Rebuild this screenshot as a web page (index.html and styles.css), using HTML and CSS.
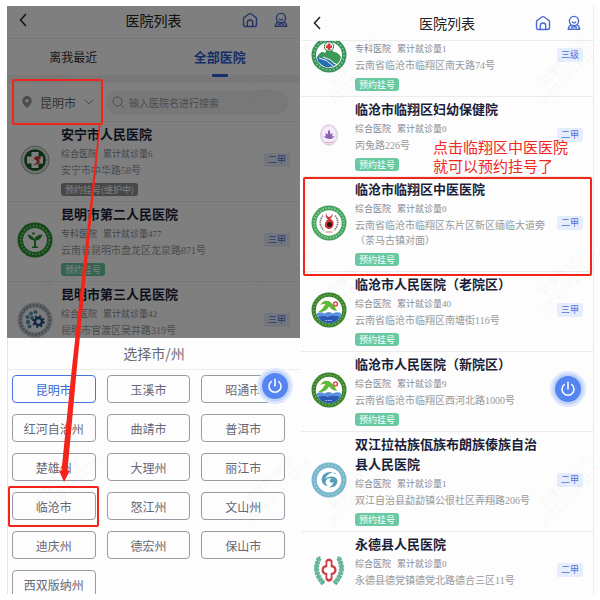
FILE: index.html
```html
<!DOCTYPE html>
<html lang="zh-CN">
<head>
<meta charset="utf-8">
<title>医院列表</title>
<link rel="stylesheet" href="styles.css">
</head>
<body>
<svg class="defs" aria-hidden="true">
  <symbol id="i-back" viewBox="0 0 8 14"><path d="M7 1 1.500 7 7 13" fill="none" stroke="#222" stroke-width="1.500"/></symbol>
  <symbol id="i-home" viewBox="0 0 16 16"><path d="M1.500 7Q1.500 5.800 2.400 5.200L6.800 2Q8 1.200 9.200 2L13.600 5.200Q14.500 5.800 14.500 7V12.500Q14.500 14.500 12.500 14.500H3.500Q1.500 14.500 1.500 12.500ZM5.300 14.500V10.700a2.700 2.700 0 0 1 5.400 0V14.500" fill="none" stroke="#4a68cf" stroke-width="1.400"/></symbol>
  <symbol id="i-user" viewBox="0 0 14 16"><g fill="none" stroke="#4a68cf" stroke-width="1.400" stroke-linejoin="round"><circle cx="7" cy="6" r="4.600"/><path d="M5 6.800Q7 9 9 6.800M3.800 9.600Q1.800 11 1.200 14.300H12.800Q12.200 11 10.200 9.600M4 12.500Q7 11 10 12.500"/></g></symbol>
  <symbol id="i-power" viewBox="0 0 36 36"><circle cx="18" cy="18" r="18" fill="#dfe8fd"/><circle cx="18" cy="18" r="15.500" fill="#c3d4fb"/><circle cx="18" cy="18" r="13" fill="#5585f2"/><path d="M14.300 13.500a6 6 0 1 0 7.400 0M18 11.300V18" fill="none" stroke="#fff" stroke-width="1.500" stroke-linecap="round"/></symbol>
  <symbol id="l-cross" viewBox="0 0 36 36"><circle cx="18" cy="18" r="14" fill="#f6f6f6" stroke="#8fa394" stroke-width="1"/><circle cx="18" cy="18" r="12.200" fill="none" stroke="#a9c4ae" stroke-width="1.300" stroke-dasharray="1.500 1.500"/><circle cx="18" cy="18" r="10.800" fill="#1f5a2b"/><path d="M14.500 10h7v4.500H26v7h-4.500V26h-7v-4.500H10v-7h4.500Z" fill="#fff"/><path d="M22.500 14.500c-5-1.500-7 2-4 3.500 3 1.500 1 4-3 4.500 6 1.500 9-3 6-5 3 0 3-2 1-3Z" fill="#d3352e"/></symbol>
  <symbol id="l-sprout" viewBox="0 0 36 36"><circle cx="18" cy="18" r="17.500" fill="#27912f"/><circle cx="18" cy="18" r="14.300" fill="none" stroke="#9fd3a2" stroke-width="1.800" stroke-dasharray="1.600 1.800"/><circle cx="18" cy="18" r="12" fill="#fff"/><path d="M17 24.500V18.500Q11.500 17.500 10.500 12.500 15.500 13 17.500 17 19 12.500 25.500 12.500 24 18 19 18.500V24.500H21V26H15V24.500Z" fill="#27912f"/><circle cx="16.500" cy="11.500" r="1.300" fill="#27912f"/></symbol>
  <symbol id="l-gear" viewBox="0 0 36 36"><circle cx="18" cy="18" r="17.500" fill="#c4c8cc"/><circle cx="18" cy="18" r="14.700" fill="none" stroke="#8797a5" stroke-width="2.500" stroke-dasharray="2 1.500"/><circle cx="18" cy="18" r="12.300" fill="#f6f8fa"/><g fill="#5595b6"><circle cx="11" cy="20" r="2.200"/><circle cx="10.500" cy="15" r="2"/><circle cx="14" cy="11.500" r="2"/><circle cx="18.500" cy="10" r="2"/><circle cx="12.500" cy="24.500" r="2"/><circle cx="15" cy="16" r="2"/></g><circle cx="21.500" cy="19.500" r="3.500" fill="none" stroke="#1e4c80" stroke-width="2.400"/><circle cx="21.500" cy="19.500" r="5.300" fill="none" stroke="#1e4c80" stroke-width="2" stroke-dasharray="2.100 2.060"/></symbol>
  <symbol id="l-landscape" viewBox="0 0 36 36"><circle cx="18" cy="18" r="17.500" fill="#369258"/><circle cx="18" cy="18" r="15" fill="none" stroke="#8cc6a0" stroke-width="1.600" stroke-dasharray="1.600 2"/><circle cx="18" cy="18" r="13" fill="#fff"/><path d="M6 20Q10 13 14 16q4-7 9-1 4 0 7 5-1 5-4 7-10-5-20-7Z" fill="#3c9a57"/><path d="M6 20q11-1 19 8-8 5-15-.5Q6 24 6 20Z" fill="#276eae"/><path d="M8 21q8 1 14 8M12 20q8 2 12 7" fill="none" stroke="#fff" stroke-width="1"/><circle cx="18" cy="9.500" r="4.700" fill="#e9eee7" stroke="#338250"/><path d="M16.700 6.500h2.600v2H21v2.600h-1.700v2h-2.600v-2H15V8.500h1.700Z" fill="#d93939"/></symbol>
  <symbol id="l-lotus" viewBox="0 0 36 36"><ellipse cx="18" cy="18" rx="8.500" ry="10.300" fill="#ecdef0" stroke="#cfc4d4" stroke-width=".8"/><ellipse cx="18" cy="17.500" rx="6.500" ry="8" fill="#f6eef9"/><path d="M18 12.500q2 2.500 1 5l2.500-1.500q.5 2.500-1 3.500l3-.5q-1.500 3.500-5.500 3t-5.500-3l3 .5q-1.500-1-1-3.500l2.500 1.500Q16 15 18 12.500Z" fill="#8a62b9"/><path d="M14 25q4 1.500 8 0" fill="none" stroke="#dba9c1"/></symbol>
  <symbol id="l-tcm" viewBox="0 0 36 36"><circle cx="18" cy="18" r="17.500" fill="#43a35c"/><circle cx="18" cy="18" r="14.900" fill="none" stroke="#8fcb9a" stroke-width="2" stroke-dasharray="1.500 1.500"/><circle cx="18" cy="18" r="12.700" fill="#fff"/><path d="M12 10.500q-6 7.500 1 15M24 10.500q6 7.500-1 15" fill="none" stroke="#8b8080" stroke-width="1.800" stroke-dasharray="1.500 .8"/><path d="M15 8q1 4 3 4t3.500-3.500q.5 4-2.500 5 4.500 2 3.500 6.500-1.500 4.500-5 4-4.500-1-3.500-5.500 1-3.500 3-4-3-2-2-6.500Z" fill="#ce3636"/><circle cx="18.500" cy="19.500" r="2.500" fill="#2a1717"/><path d="M14.500 27h7" stroke="#c77"/></symbol>
  <symbol id="l-people" viewBox="0 0 36 36"><circle cx="18" cy="18" r="17.500" fill="#39832c"/><circle cx="18" cy="18" r="15.200" fill="none" stroke="#7fb56c" stroke-width="1.300" stroke-dasharray="1.300 2"/><circle cx="18" cy="18" r="13.200" fill="#fff"/><path d="M7 20Q12 17 14.500 12q-3-.5-5.500 1 3.500-5.500 9-4 5 3.500 8 10-5-.5-8-4.500-3 6-11 5.500Z" fill="#62b83c"/><path d="M5.500 21.500q4.500-2.500 7.500 0 5-3 9 0 4-2.500 8.500 0-2 9.500-12.500 9.700-10-.2-12.500-9.700Z" fill="#5b91dd"/><path d="M7.500 25q5-2 9 0 6-2.500 12 0-3 6-10.500 6T7.500 25Z" fill="#2d59b5"/><path d="M14.500 28.500h7" stroke="#a9c0ea" stroke-dasharray="1.500 .8"/><circle cx="24.500" cy="12" r="1.900" fill="none" stroke="#d65345" stroke-width="1.500"/></symbol>
  <symbol id="l-swirl" viewBox="0 0 36 36"><circle cx="18" cy="18" r="17.500" fill="#78b7cc"/><circle cx="18" cy="18" r="14.900" fill="none" stroke="#a5d0dd" stroke-width="1.500" stroke-dasharray="1.300 2.500"/><circle cx="18" cy="18" r="12.300" fill="#fff"/><path d="M22 10Q11 9 10.500 17.500 11 24 17 24q-3.500-2.500-2-5.500 2-3 5.500-2-2.500 1.500-1.500 3.500 1.500 1.500 3.500 0-.5 3-4.500 5.500 9-.5 8.500-7-1.500-4.500-7-4-3 .3-5.500 2.500Q16 12 22 10Z" fill="#579eb9"/><path d="M22.500 11q2.500-.5 2.500 1.500" fill="none" stroke="#92c2d2"/></symbol>
  <symbol id="l-laurel" viewBox="0 0 36 36"><g fill="none" stroke="#66b59b"><path d="M9 4.500Q0 19 13 31.500M27 4.500Q36 19 23 31.500" stroke-width="2"/><path d="M8.500 6Q1 19 12.500 31.500M27.500 6Q35 19 23.500 31.500" stroke-width="5" stroke-dasharray="3 .6"/></g><path d="M14.500 8.500Q18 4.500 21.500 8.500V13q4 1 4 5t-4 5v4.500Q18 32 14.500 27.500V23q-4-1-4-5t4-5Z" fill="#cc4148"/><path d="M16.300 10Q18 8 19.700 10v5q3.500.5 3.500 3t-3.500 3v5Q18 28 16.300 26v-5q-3.500-.5-3.500-3t3.500-3Z" fill="#fff"/></symbol>
</svg>

<main class="board">
  <section class="phone phone-city">
    <div class="page dimmed">
      <header class="bar">
        <a class="back" href="#" aria-label="返回"><svg><use href="#i-back"/></svg></a>
        <h1>医院列表</h1>
        <nav><a href="#" aria-label="首页"><svg class="home"><use href="#i-home"/></svg></a><a href="#" aria-label="我的"><svg class="user"><use href="#i-user"/></svg></a></nav>
      </header>
      <div class="tabs"><button>离我最近</button><button class="on">全部医院</button></div>
      <div class="filter">
        <button class="place">
          <svg class="pin" viewBox="0 0 10 12"><path fill-rule="evenodd" d="M5 0a4.700 4.700 0 0 1 4.700 4.700Q9.700 8 5 12 .3 8 .3 4.700A4.700 4.700 0 0 1 5 0ZM5 3a1.800 1.800 0 1 0 0 3.600A1.800 1.800 0 0 0 5 3Z" fill="#999"/></svg>
          <span>昆明市</span>
          <svg class="down" viewBox="0 0 10 6"><path d="M.7.7 5 5 9.300.7" fill="none" stroke="#999"/></svg>
        </button>
        <label class="search"><svg viewBox="0 0 12 12"><path d="M9 9 11.500 11.500M5.500 1a4.500 4.500 0 1 0 0 9 4.500 4.500 0 0 0 0-9Z" fill="none" stroke="#999"/></svg><input type="text" placeholder="输入医院名进行搜索" aria-label="搜索医院"></label>
      </div>
      <ul class="list">
        <li><svg class="logo"><use href="#l-cross"/></svg><div class="info"><h2>安宁市人民医院</h2><p class="meta"><span>综合医院</span><span>累计就诊量6</span></p><p class="addr">安宁市中华路58号</p><button class="book off">预约挂号(维护中)</button></div><span class="grade">二甲</span></li>
        <li><svg class="logo"><use href="#l-sprout"/></svg><div class="info"><h2>昆明市第二人民医院</h2><p class="meta"><span>专科医院</span><span>累计就诊量477</span></p><p class="addr">云南省昆明市盘龙区龙泉路871号</p><button class="book">预约挂号</button></div><span class="grade">三甲</span></li>
        <li><svg class="logo"><use href="#l-gear"/></svg><div class="info"><h2>昆明市第三人民医院</h2><p class="meta"><span>综合医院</span><span>累计就诊量42</span></p><p class="addr">昆明市官渡区吴井路319号</p></div><span class="grade">三甲</span></li>
      </ul>
    </div>
    <div class="sheet">
      <h2>选择市/州</h2>
      <div class="cities">
        <button class="on">昆明市</button><button>玉溪市</button><button>昭通市</button>
        <button>红河自治州</button><button>曲靖市</button><button>普洱市</button>
        <button>楚雄州</button><button>大理州</button><button>丽江市</button>
        <button>临沧市</button><button>怒江州</button><button>文山州</button>
        <button>迪庆州</button><button>德宏州</button><button>保山市</button>
        <button>西双版纳州</button>
      </div>
    </div>
    <button class="power" aria-label="退出"><svg><use href="#i-power"/></svg></button>
  </section>

  <section class="phone phone-list">
    <header class="bar">
      <a class="back" href="#" aria-label="返回"><svg><use href="#i-back"/></svg></a>
      <h1>医院列表</h1>
      <nav><a href="#" aria-label="首页"><svg class="home"><use href="#i-home"/></svg></a><a href="#" aria-label="我的"><svg class="user"><use href="#i-user"/></svg></a></nav>
    </header>
    <div class="scroller">
      <ul class="list scrolled">
        <li><svg class="logo"><use href="#l-landscape"/></svg><div class="info"><div class="passed"></div><p class="meta"><span>专科医院</span><span>累计就诊量1</span></p><p class="addr">云南省临沧市临翔区南天路74号</p><button class="book">预约挂号</button></div><span class="grade">三级</span></li>
        <li><svg class="logo"><use href="#l-lotus"/></svg><div class="info"><h2>临沧市临翔区妇幼保健院</h2><p class="meta"><span>综合医院</span><span>累计就诊量0</span></p><p class="addr">丙兔路226号</p><button class="book">预约挂号</button></div><span class="grade">二甲</span></li>
        <li><svg class="logo"><use href="#l-tcm"/></svg><div class="info"><h2>临沧市临翔区中医医院</h2><p class="meta"><span>综合医院</span><span>累计就诊量0</span></p><p class="addr">云南省临沧市临翔区东片区新区缅临大道旁（茶马古镇对面）</p><button class="book">预约挂号</button></div><span class="grade">二甲</span></li>
        <li><svg class="logo"><use href="#l-people"/></svg><div class="info"><h2>临沧市人民医院（老院区）</h2><p class="meta"><span>综合医院</span><span>累计就诊量40</span></p><p class="addr">云南省临沧市临翔区南塘街116号</p><button class="book">预约挂号</button></div><span class="grade">三甲</span></li>
        <li><svg class="logo"><use href="#l-people"/></svg><div class="info"><h2>临沧市人民医院（新院区）</h2><p class="meta"><span>综合医院</span><span>累计就诊量9</span></p><p class="addr">云南省临沧市临翔区西河北路1000号</p><button class="book">预约挂号</button></div></li>
        <li><svg class="logo"><use href="#l-swirl"/></svg><div class="info"><h2>双江拉祜族佤族布朗族傣族自治县人民医院</h2><p class="meta"><span>综合医院</span><span>累计就诊量1</span></p><p class="addr">双江自治县勐勐镇公很社区弄翔路206号</p><button class="book">预约挂号</button></div><span class="grade">二甲</span></li>
        <li><svg class="logo"><use href="#l-laurel"/></svg><div class="info"><h2>永德县人民医院</h2><p class="meta"><span>综合医院</span><span>累计就诊量0</span></p><p class="addr">永德县德党镇德党北路德合三区11号</p></div><span class="grade">二甲</span></li>
      </ul>
    </div>
    <button class="power" aria-label="退出"><svg><use href="#i-power"/></svg></button>
  </section>

  <svg class="marks" viewBox="0 0 600 600" aria-hidden="true">
    <defs><g id="wm" class="wm"><text x="0" y="0">管理员 D6DF</text><text x="-12" y="14">2021.07.14 11:24</text></g></defs>
    <use href="#wm" transform="translate(38 88) rotate(-45)"/><use href="#wm" transform="translate(250 88) rotate(-45)"/>
    <use href="#wm" transform="translate(38 298) rotate(-45)"/><use href="#wm" transform="translate(250 298) rotate(-45)"/>
    <use href="#wm" transform="translate(38 504) rotate(-45)"/><use href="#wm" transform="translate(250 504) rotate(-45)"/>
    <use href="#wm" transform="translate(333 86) rotate(-45)"/><use href="#wm" transform="translate(544 86) rotate(-45)"/>
    <use href="#wm" transform="translate(333 296) rotate(-45)"/><use href="#wm" transform="translate(544 296) rotate(-45)"/>
    <use href="#wm" transform="translate(333 508) rotate(-45)"/><use href="#wm" transform="translate(544 508) rotate(-45)"/>
    <g fill="none" stroke="#f3251b" stroke-width="2">
      <rect x="13" y="80" width="89" height="44" rx="1"/>
      <rect x="9" y="487" width="89" height="39" rx="1"/>
      <rect x="304" y="178" width="287" height="97" rx="1"/>
    </g>
    <path d="M99 124H100.500L76.500 372 67.500 470.500H70L64 482 59 470.500H61.500L71.500 372Z" fill="#f3251b"/>
  </svg>
  <p class="note">点击临翔区中医医院<br>就可以预约挂号了</p>
</main>
</body>
</html>
```
FILE: styles.css
```css
* { box-sizing: border-box; margin: 0; padding: 0; }
body { background: #fff; color: #1b1f3b; font-family: "Noto Sans CJK SC", sans-serif; }
button, input { border: 0; background: none; font: inherit; color: inherit; }
a { display: flex; }
ul { list-style: none; }
svg { display: block; }
.defs { position: absolute; width: 0; height: 0; }

.board {
  position: relative;
  display: grid;
  grid-template-columns: 1fr 1fr;
  grid-template-rows: minmax(0, 1fr);
  gap: 1px;
  height: 100vh;
  padding: 6px 6px 6px 7px;
}
.phone { position: relative; min-width: 0; overflow: hidden; background: #fdfdfd; }
.phone-city { display: grid; grid-template-rows: minmax(0, 83fr) minmax(0, 64fr); }
.phone-list { display: flex; flex-direction: column; border-right: 1px solid #ededf0; }
.page { position: relative; overflow: hidden; background: #fff; }
.dimmed::after { content: ""; position: absolute; inset: 0; z-index: 2; background: rgba(0, 0, 0, .5); }

.bar {
  display: grid;
  grid-template-columns: 1fr auto 1fr;
  align-items: center;
  height: 33px;
  padding: 0 12px 4px;
  border-bottom: 1px solid #ececec;
  flex: none;
}
.phone-list .bar { height: 35px; padding-bottom: 1px; }
.bar h1 { font-size: 14px; font-weight: 400; line-height: 20px; color: #222; }
.bar nav { display: flex; justify-content: flex-end; gap: 16px; }
.back svg { width: 8px; height: 14px; }
.home { width: 16px; height: 16px; }
.user { width: 14px; height: 16px; }

.tabs { display: grid; grid-template-columns: 1fr 1fr; border-bottom: 8px solid #f1f1f3; }
.tabs button { position: relative; height: 36px; padding: 0 14px 2px 0; font-size: 12px; color: #333; }
.tabs .on { font-size: 13px; font-weight: 700; color: #2d5cd6; }
.tabs .on::after {
  content: "";
  position: absolute;
  left: calc(50% - 15px);
  bottom: -2px;
  width: 16px;
  height: 3px;
  border-radius: 1px;
  background: #2d5cd6;
}

.filter { display: flex; align-items: center; gap: 12px; height: 39px; padding: 0 12px 0 15px; border-bottom: 1px solid #ececec; }
.place { display: flex; align-items: center; gap: 8px; font-size: 12px; color: #666; }
.pin { width: 10px; height: 12px; }
.down { width: 10px; height: 6px; }
.search { display: flex; flex: 1; align-items: center; gap: 5px; height: 25px; padding: 0 6px; border-radius: 13px; background: #f0f0f2; }
.search svg { width: 12px; height: 12px; }
.search input { flex: 1; min-width: 0; font-size: 10px; outline: 0; }
.search input::placeholder { color: #999; opacity: 1; }

.scroller { flex: 1; min-height: 0; overflow: hidden; }
.scrolled { margin-top: -24px; }
.list li { display: flex; align-items: center; padding: 2px 10px 5px; border-bottom: 1px solid #ececec; }
.logo { flex: none; width: 36px; height: 36px; }
.info { width: 192px; margin-left: 8px; }
.info h2 { font-size: 13px; font-weight: 700; line-height: 20px; color: #1b1f3b; }
.passed { height: 20px; }
.meta { display: flex; gap: 6px; margin-top: 4px; font: 9px/12px "Liberation Serif", "Noto Sans CJK SC", sans-serif; color: #858795; }
.addr { margin-top: 3px; font: 10px/15px "Liberation Serif", "Noto Sans CJK SC", sans-serif; color: #999; }
.book { display: block; height: 13px; margin-top: 5px; padding: 0 4px; border-radius: 3px; background: #69c9a0; color: #fff; font-size: 9px; line-height: 13px; }
.off { background: #8f8f8f; }
.grade { margin-left: auto; padding: 0 4px; border-radius: 2px; background: #e6edfd; color: #4c74dc; font-size: 9px; line-height: 14px; }
.list li:last-child { min-height: 80px; align-items: flex-start; }
.list li:last-child .logo, .list li:last-child .grade { align-self: center; }

.sheet { overflow: hidden; background: #fdfdfd; border-left: 1px solid #e6e6e6; }
.sheet h2 { height: 32px; border-bottom: 1px solid #ededed; text-align: center; font-size: 14px; font-weight: 400; line-height: 30px; color: #666876; }
.cities { display: grid; grid-template-columns: repeat(3, 1fr); gap: 11px; padding: 5px 15px 0 4px; }
.cities button { height: 28px; border: 1px solid #989aa5; border-radius: 4px; font-size: 12px; color: #666876; }
.cities .on { border-color: #4a74dc; color: #3565d8; }

.power { position: absolute; right: 7px; top: 362px; width: 36px; height: 36px; }
.phone-list .power { top: 365px; }
.power svg { width: 36px; height: 36px; }

.marks { position: absolute; inset: 0; z-index: 4; width: 100%; height: 100%; pointer-events: none; }
.wm { font: 11px "Liberation Sans", "Noto Sans CJK SC", sans-serif; fill: #000; fill-opacity: .05; }
.note { position: absolute; left: 433px; top: 137px; z-index: 5; font-size: 15px; line-height: 19px; white-space: nowrap; color: #f0281f; }
```
